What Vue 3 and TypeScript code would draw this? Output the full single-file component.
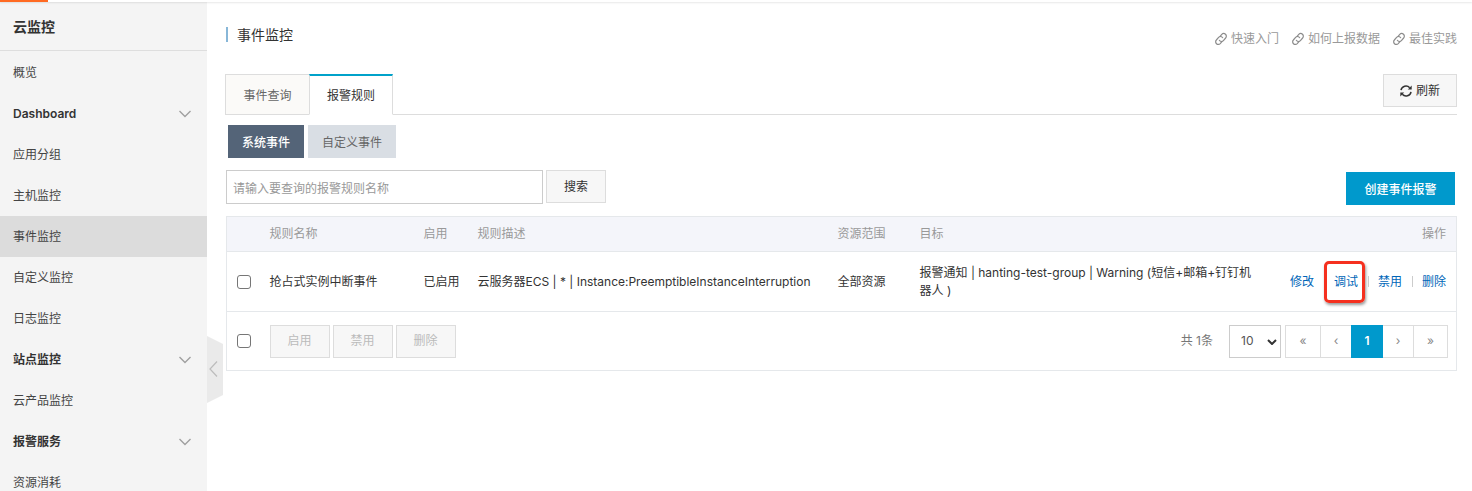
<script setup lang="ts">
import { ref, computed } from 'vue'

interface NavItem {
  label: string
  group?: boolean
  active?: boolean
}

interface Rule {
  id: number
  name: string
  status: string
  description: string
  scope: string
  target: string
}

const navItems: NavItem[] = [
  { label: '概览' },
  { label: 'Dashboard', group: true },
  { label: '应用分组' },
  { label: '主机监控' },
  { label: '事件监控', active: true },
  { label: '自定义监控' },
  { label: '日志监控' },
  { label: '站点监控', group: true },
  { label: '云产品监控' },
  { label: '报警服务', group: true },
  { label: '资源消耗' },
]

const helpLinks: string[] = ['快速入门', '如何上报数据', '最佳实践']
const batchActions: string[] = ['启用', '禁用', '删除']
const rowActions: string[] = ['修改', '调试', '禁用', '删除']

const rules: Rule[] = [
  {
    id: 1,
    name: '抢占式实例中断事件',
    status: '已启用',
    description: '云服务器ECS | * | Instance:PreemptibleInstanceInterruption',
    scope: '全部资源',
    target: '报警通知 | hanting-test-group | Warning (短信+邮箱+钉钉机器人 )',
  },
]

const keyword = ref('')
const pageSize = ref(10)
const selected = ref<number[]>([])
const allSelected = computed<boolean>({
  get: () => selected.value.length === rules.length,
  set: (value) => {
    selected.value = value ? rules.map((rule) => rule.id) : []
  },
})
</script>

<template>
  <div class="page">
    <div class="topbar"><div class="topbar-mark"></div></div>
    <div class="layout">
      <aside class="sidebar">
        <h1 class="product">云监控</h1>
        <nav class="nav" aria-label="云监控">
          <a
            v-for="item in navItems"
            :key="item.label"
            href="#"
            class="nav-item"
            :class="{ group: item.group, active: item.active }"
          >
            <span>{{ item.label }}</span>
            <svg v-if="item.group" class="chevron" viewBox="0 0 14 8" aria-hidden="true">
              <path d="M1.5 1 L7 6.5 L12.500 1" />
            </svg>
          </a>
        </nav>
        <button class="collapse" type="button" aria-label="收起">
          <svg viewBox="0 0 16 67" aria-hidden="true">
            <polygon points="0,0 16,8 16,59 0,67" fill="#eaeaea" />
            <path d="M10 25.500 L3 33 L10 40.500" fill="none" stroke="#bcbcbc" stroke-width="1.2" />
          </svg>
        </button>
      </aside>

      <main class="main">
        <header class="header">
          <h2 class="title">事件监控</h2>
          <div class="help">
            <a v-for="link in helpLinks" :key="link" href="#" class="help-link">
              <svg class="link-icon" viewBox="1 1 22 22" aria-hidden="true">
                <path d="M8.600 13.600 A4.600 4.600 0 0 0 16.400 15 L20.500 10.200 A4.700 4.700 0 0 0 13.400 3.600 L9.500 8" />
                <path d="M15.400 10.400 A4.600 4.600 0 0 0 7.600 9 L3.500 13.800 A4.700 4.700 0 0 0 10.600 20.400 L14.500 16" />
              </svg>
              <span>{{ link }}</span>
            </a>
          </div>
        </header>

        <div class="tabs">
          <div class="tab-list" role="tablist">
            <button class="tab" type="button" role="tab" aria-selected="false">事件查询</button>
            <button class="tab current" type="button" role="tab" aria-selected="true">报警规则</button>
          </div>
          <button class="btn refresh" type="button">
            <svg class="refresh-icon" viewBox="0 0 12 12" aria-hidden="true">
              <path d="M1 5.200 A5 5 0 0 1 9.700 2.700" fill="none" stroke="#333" stroke-width="1.500" />
              <polygon points="11.700,0.600 11.700,4.500 7.800,4.500" fill="#333" />
              <path d="M11 6.800 A5 5 0 0 1 2.300 9.300" fill="none" stroke="#333" stroke-width="1.500" />
              <polygon points="0.300,11.400 0.300,7.500 4.200,7.500" fill="#333" />
            </svg>
            <span>刷新</span>
          </button>
        </div>

        <div class="subtabs">
          <button class="subtab chosen" type="button">系统事件</button>
          <button class="subtab" type="button">自定义事件</button>
        </div>

        <div class="toolbar">
          <form class="search" @submit.prevent>
            <input
              v-model="keyword"
              class="search-input"
              type="text"
              aria-label="报警规则名称"
              placeholder="请输入要查询的报警规则名称"
            />
            <button class="btn" type="submit">搜索</button>
          </form>
          <button class="create" type="button">创建事件报警</button>
        </div>

        <table class="rules">
          <colgroup>
            <col class="c-check" />
            <col class="c-name" />
            <col class="c-status" />
            <col class="c-desc" />
            <col class="c-scope" />
            <col />
            <col class="c-ops" />
          </colgroup>
          <thead>
            <tr>
              <th></th>
              <th>规则名称</th>
              <th>启用</th>
              <th>规则描述</th>
              <th>资源范围</th>
              <th>目标</th>
              <th class="ops">操作</th>
            </tr>
          </thead>
          <tbody>
            <tr v-for="rule in rules" :key="rule.id">
              <td class="check">
                <input v-model="selected" type="checkbox" :value="rule.id" :aria-label="rule.name" />
              </td>
              <td>{{ rule.name }}</td>
              <td>{{ rule.status }}</td>
              <td class="nowrap">{{ rule.description }}</td>
              <td>{{ rule.scope }}</td>
              <td class="target">{{ rule.target }}</td>
              <td class="ops">
                <div class="row-actions">
                  <a
                    v-for="action in rowActions"
                    :key="action"
                    href="#"
                    class="action"
                    :class="{ marked: action === '调试' }"
                    >{{ action }}</a
                  >
                </div>
              </td>
            </tr>
          </tbody>
          <tfoot>
            <tr>
              <td class="check">
                <input v-model="allSelected" type="checkbox" aria-label="全选" />
              </td>
              <td colspan="6">
                <div class="footer">
                  <div class="batch">
                    <button v-for="action in batchActions" :key="action" class="btn" type="button" disabled>
                      {{ action }}
                    </button>
                  </div>
                  <div class="paging">
                    <span class="total">共 1条</span>
                    <div class="size">
                      <select v-model="pageSize" aria-label="每页条数">
                        <option :value="10">10</option>
                        <option :value="20">20</option>
                        <option :value="50">50</option>
                      </select>
                      <svg class="size-arrow" viewBox="0 0 10 6" aria-hidden="true">
                        <path d="M1 1 L5 5 L9 1" />
                      </svg>
                    </div>
                    <nav class="pager" aria-label="分页">
                      <button type="button">«</button>
                      <button type="button">‹</button>
                      <button type="button" class="on">1</button>
                      <button type="button">›</button>
                      <button type="button">»</button>
                    </nav>
                  </div>
                </div>
              </td>
            </tr>
          </tfoot>
        </table>
      </main>
    </div>
  </div>
</template>

<style>
body {
  margin: 0;
  background: #fff;
}
</style>

<style scoped>
.page,
.page *,
.page *::before,
.page *::after {
  box-sizing: border-box;
}
.page {
  display: flex;
  flex-direction: column;
  height: 100vh;
  overflow: hidden;
  color: #333;
  font: 12px/18px Inter, 'Noto Sans CJK SC', sans-serif;
}
button,
input,
select {
  font: inherit;
  color: inherit;
}
button {
  cursor: pointer;
}
button:disabled {
  cursor: default;
}
a {
  color: inherit;
  text-decoration: none;
}
.topbar {
  flex: none;
  height: 2px;
  background: #fff;
  box-shadow: 0 1px 2px rgba(0, 0, 0, 0.1);
  position: relative;
  z-index: 2;
}
.topbar-mark {
  width: 48px;
  height: 2px;
  background: #ff6a22;
}
.layout {
  display: flex;
  flex: 1;
  min-height: 0;
}
.sidebar {
  position: relative;
  flex: none;
  display: flex;
  flex-direction: column;
  width: 207px;
  background: #f4f4f4;
}
.product {
  flex: none;
  margin: 0;
  padding: 0 13px;
  height: 49px;
  line-height: 50px;
  font-size: 14px;
  font-weight: 600;
  border-bottom: 1px solid #dedede;
}
.nav {
  flex: 1;
  min-height: 0;
  padding-top: 1px;
  overflow: auto;
  scrollbar-width: none;
}
.nav-item {
  display: flex;
  align-items: center;
  justify-content: space-between;
  height: 41px;
  padding: 0 15px 0 13px;
  color: #444;
}
.nav-item.group {
  font-weight: 600;
  color: #333;
}
.nav-item.active {
  background: #dcdcdc;
}
.chevron {
  width: 14px;
  height: 8px;
  fill: none;
  stroke: #a0a0a0;
  stroke-width: 1.4;
}
.collapse {
  position: absolute;
  left: 100%;
  top: 334px;
  width: 16px;
  height: 67px;
  padding: 0;
  border: 0;
  background: none;
}
.collapse svg {
  display: block;
  width: 16px;
  height: 67px;
}
.main {
  flex: 1;
  min-width: 0;
  padding: 22px 15px 20px 19px;
  overflow: auto;
}
.header {
  display: flex;
  justify-content: space-between;
  height: 50px;
}
.title {
  height: 15px;
  margin: 3px 0 0;
  padding-left: 9px;
  border-left: 2px solid #88b7d8;
  font-size: 14px;
  line-height: 15px;
  font-weight: 400;
}
.help {
  display: flex;
  gap: 13px;
  padding-top: 6px;
  color: #999;
}
.help-link {
  display: flex;
  gap: 4px;
  height: 18px;
  align-items: center;
}
.link-icon {
  width: 12px;
  height: 12px;
  fill: none;
  stroke: #8c8c8c;
  stroke-width: 2.2;
  overflow: visible;
}
.tabs {
  display: flex;
  justify-content: space-between;
  height: 41px;
  border-bottom: 1px solid #ddd;
}
.tab-list {
  display: flex;
  margin-left: -1px;
}
.tab {
  width: 84px;
  height: 41px;
  padding: 2px 0 0;
  border: 1px solid #ddd;
  border-right: 0;
  background: #fbfaf8;
  color: #666;
}
.tab.current {
  padding-top: 1px;
  border-top: 2px solid #00a2ca;
  border-right: 1px solid #ddd;
  border-bottom-color: #fff;
  background: #fff;
  color: #333;
}
.btn {
  height: 33px;
  min-width: 60px;
  padding: 0 16px;
  border: 1px solid #ddd;
  background: #f7f7f7;
}
.btn:disabled {
  color: #bbb;
}
.refresh {
  display: flex;
  align-items: center;
  gap: 4px;
}
.refresh-icon {
  width: 12px;
  height: 12px;
}
.subtabs {
  display: flex;
  gap: 4px;
  padding: 10px 2px 0;
}
.subtab {
  height: 33px;
  padding: 2px 14px 0;
  border: 0;
  background: #d9dee4;
  color: #666;
}
.subtab.chosen {
  background: #546478;
  color: #fff;
  font-weight: 500;
}
.toolbar {
  display: flex;
  justify-content: space-between;
  padding: 12px 2px 0 0;
}
.search {
  display: flex;
  gap: 3px;
}
.search-input {
  width: 317px;
  height: 34px;
  padding: 2px 6px 0;
  border: 1px solid #ccc;
  border-radius: 0;
  outline: none;
}
.search-input::placeholder {
  color: #999;
}
.create {
  width: 109px;
  height: 33px;
  margin-top: 2px;
  padding: 2px 0 0;
  border: 0;
  background: #0099cc;
  color: #fff;
  font-weight: 500;
}
.rules {
  width: 100%;
  margin-top: 11px;
  border-collapse: collapse;
  table-layout: fixed;
  border: 1px solid #e5e8eb;
}
.c-check {
  width: 35px;
}
.c-name {
  width: 154px;
}
.c-status {
  width: 54px;
}
.c-desc {
  width: 360px;
}
.c-scope {
  width: 82px;
}
.c-ops {
  width: 189px;
}
.rules th,
.rules td {
  padding: 0 8px;
  text-align: left;
  border-bottom: 1px solid #e5e8eb;
}
.rules th {
  height: 35px;
  background: #f4f5fa;
  color: #999;
  font-weight: 400;
}
.rules tbody td {
  height: 60px;
}
.rules tfoot td {
  height: 59px;
}
.rules .check {
  padding: 0 0 0 10px;
}
.check input {
  display: block;
  appearance: none;
  width: 14px;
  height: 14px;
  margin: 0;
  border: 1px solid #767676;
  border-radius: 3px;
  background: #fff;
}
.check input:checked {
  background: #0099cc;
}
.nowrap {
  white-space: nowrap;
}
.rules .ops {
  padding-right: 10px;
  text-align: right;
}
.row-actions {
  display: flex;
  justify-content: flex-end;
  align-items: center;
}
.action {
  display: flex;
  align-items: center;
  position: relative;
  color: #0066b8;
}
.action + .action::before {
  content: '';
  width: 1px;
  height: 11px;
  margin: 0 9px 0 10px;
  background: #ccc;
}
.action.marked::after {
  content: '';
  position: absolute;
  right: -7px;
  top: -12px;
  width: 41px;
  height: 42px;
  border: 3px solid #f5301f;
  border-radius: 5px;
  box-shadow: 1px 2px 3px rgba(0, 0, 0, 0.4);
}
.action.marked::before {
  visibility: hidden;
}
.footer {
  display: flex;
  justify-content: space-between;
}
.batch {
  display: flex;
  gap: 3px;
}
.paging {
  display: flex;
  align-items: center;
}
.total {
  margin-right: 16px;
  color: #777;
}
.size {
  position: relative;
  margin-right: 4px;
}
.size select {
  display: block;
  appearance: none;
  width: 52px;
  height: 33px;
  padding: 0 11px;
  border: 1px solid #ccc;
  border-radius: 0;
  background: #fff;
  color: #555;
}
.size-arrow {
  position: absolute;
  right: 4px;
  top: 14px;
  width: 10px;
  height: 6px;
  fill: none;
  stroke: #333;
  stroke-width: 2;
  pointer-events: none;
}
.pager {
  display: flex;
}
.pager button {
  width: 36px;
  height: 33px;
  margin-right: -1px;
  padding: 0;
  border: 1px solid #ddd;
  background: #fff;
  color: #888;
}
.pager button:last-child {
  width: 35px;
  margin-right: 0;
}
.pager button:nth-child(n + 2):nth-child(-n + 4) {
  width: 32px;
}
.pager button.on {
  border-color: #0099cc;
  background: #0099cc;
  color: #fff;
  font-weight: 600;
  position: relative;
}
</style>
